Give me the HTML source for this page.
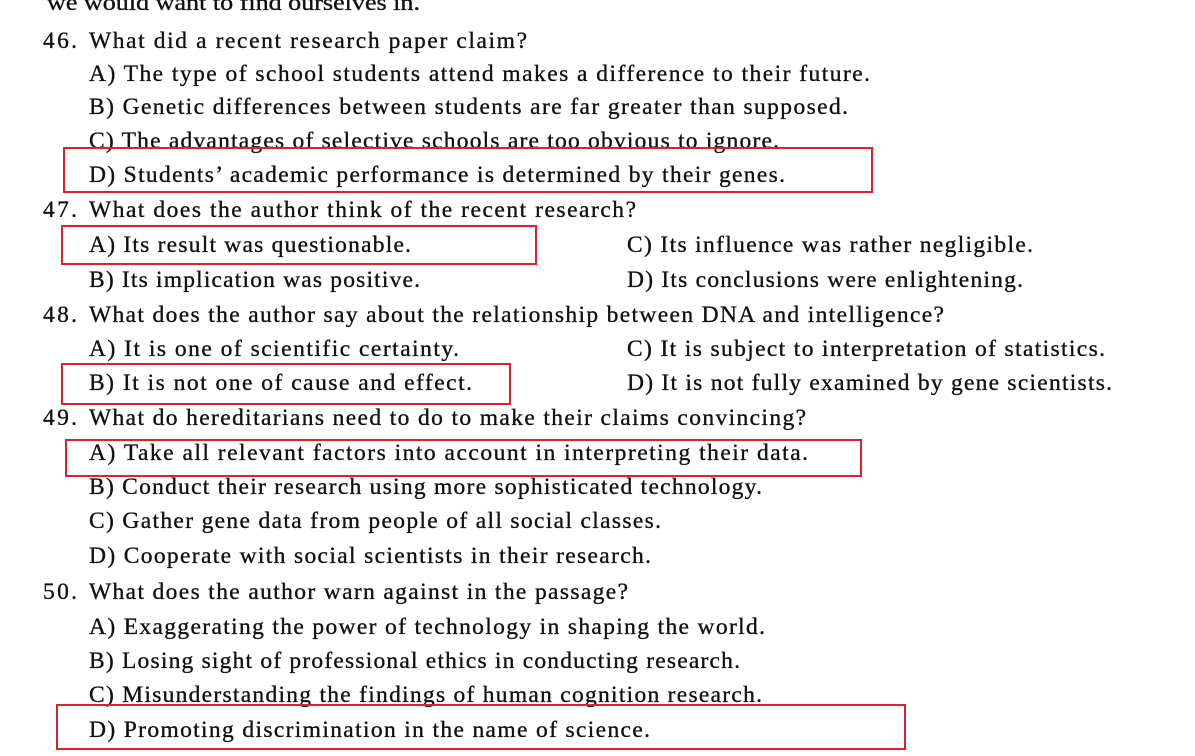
<!DOCTYPE html>
<html><head><meta charset="utf-8"><style>
html,body{margin:0;padding:0;background:#fff;}
svg{display:block}
text{font-family:"Liberation Serif",serif;font-size:23.5px;fill:#111;stroke:#111;stroke-width:0.35px;}
rect{fill:none;stroke:#e0202a;stroke-width:2}
</style></head><body>
<svg width="1195" height="756" viewBox="0 0 1195 756" xmlns="http://www.w3.org/2000/svg">
<text x="47" y="10" textLength="373" lengthAdjust="spacingAndGlyphs">we would want to find ourselves in.</text>

<text x="43" y="48" textLength="34" lengthAdjust="spacing">46.</text>
<text x="89" y="48" textLength="438" lengthAdjust="spacing">What did a recent research paper claim?</text>
<text x="89" y="81" textLength="781" lengthAdjust="spacing">A) The type of school students attend makes a difference to their future.</text>
<text x="89" y="114" textLength="759" lengthAdjust="spacing">B) Genetic differences between students are far greater than supposed.</text>
<text x="89" y="148" textLength="690" lengthAdjust="spacing">C) The advantages of selective schools are too obvious to ignore.</text>
<text x="89" y="182" textLength="696" lengthAdjust="spacing">D) Students’ academic performance is determined by their genes.</text>

<text x="43" y="217" textLength="34" lengthAdjust="spacing">47.</text>
<text x="89" y="217" textLength="547" lengthAdjust="spacing">What does the author think of the recent research?</text>
<text x="89" y="252" textLength="322" lengthAdjust="spacing">A) Its result was questionable.</text>
<text x="627" y="252" textLength="406" lengthAdjust="spacing">C) Its influence was rather negligible.</text>
<text x="89" y="287" textLength="331" lengthAdjust="spacing">B) Its implication was positive.</text>
<text x="627" y="287" textLength="396" lengthAdjust="spacing">D) Its conclusions were enlightening.</text>

<text x="43" y="322" textLength="34" lengthAdjust="spacing">48.</text>
<text x="89" y="322" textLength="855" lengthAdjust="spacing">What does the author say about the relationship between DNA and intelligence?</text>
<text x="89" y="356" textLength="370" lengthAdjust="spacing">A) It is one of scientific certainty.</text>
<text x="627" y="356" textLength="478" lengthAdjust="spacing">C) It is subject to interpretation of statistics.</text>
<text x="89" y="390" textLength="383" lengthAdjust="spacing">B) It is not one of cause and effect.</text>
<text x="627" y="390" textLength="485" lengthAdjust="spacing">D) It is not fully examined by gene scientists.</text>

<text x="43" y="425" textLength="34" lengthAdjust="spacing">49.</text>
<text x="89" y="425" textLength="717" lengthAdjust="spacing">What do hereditarians need to do to make their claims convincing?</text>
<text x="89" y="460" textLength="719" lengthAdjust="spacing">A) Take all relevant factors into account in interpreting their data.</text>
<text x="89" y="494" textLength="673" lengthAdjust="spacing">B) Conduct their research using more sophisticated technology.</text>
<text x="89" y="528" textLength="572" lengthAdjust="spacing">C) Gather gene data from people of all social classes.</text>
<text x="89" y="563" textLength="562" lengthAdjust="spacing">D) Cooperate with social scientists in their research.</text>

<text x="43" y="599" textLength="34" lengthAdjust="spacing">50.</text>
<text x="89" y="599" textLength="539" lengthAdjust="spacing">What does the author warn against in the passage?</text>
<text x="89" y="634" textLength="676" lengthAdjust="spacing">A) Exaggerating the power of technology in shaping the world.</text>
<text x="89" y="668" textLength="651" lengthAdjust="spacing">B) Losing sight of professional ethics in conducting research.</text>
<text x="89" y="702" textLength="673" lengthAdjust="spacing">C) Misunderstanding the findings of human cognition research.</text>
<text x="89" y="737" textLength="561" lengthAdjust="spacing">D) Promoting discrimination in the name of science.</text>

<rect x="64" y="148" width="808" height="44"/>
<rect x="62" y="226" width="474" height="38"/>
<rect x="62" y="364" width="448" height="40"/>
<rect x="66" y="440" width="795" height="36"/>
<rect x="57" y="705" width="848" height="44"/>
</svg>
</body></html>
